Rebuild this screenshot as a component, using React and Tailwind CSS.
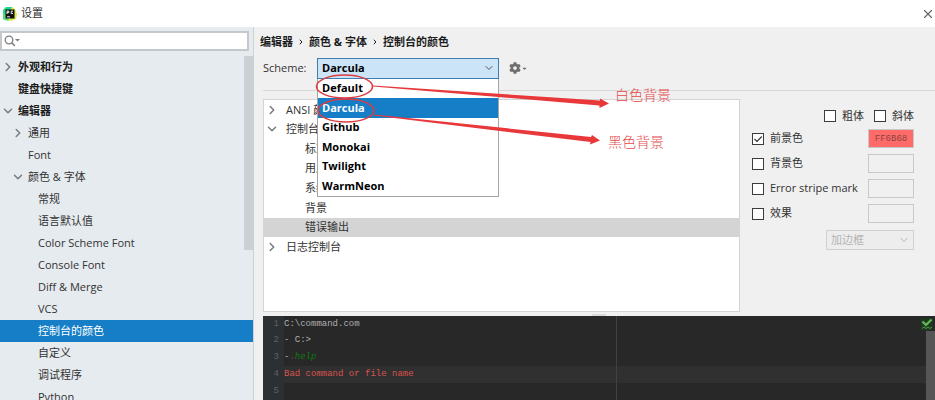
import { useState } from "react";
import { ChevronDown, ChevronRight, X } from "lucide-react";
import { FaCaretDown, FaCog } from "react-icons/fa";

const navItems = [
  { label: "外观和行为", level: 0, icon: "closed" },
  { label: "键盘快捷键", level: 0 },
  { label: "编辑器", level: 0, icon: "open" },
  { label: "通用", level: 1, icon: "closed" },
  { label: "Font", level: 1 },
  { label: "颜色 & 字体", level: 1, icon: "open" },
  { label: "常规", level: 2 },
  { label: "语言默认值", level: 2 },
  { label: "Color Scheme Font", level: 2 },
  { label: "Console Font", level: 2 },
  { label: "Diff & Merge", level: 2 },
  { label: "VCS", level: 2 },
  { label: "控制台的颜色", level: 2 },
  { label: "自定义", level: 2 },
  { label: "调试程序", level: 2 },
  { label: "Python", level: 2 },
];

const navIndent = ["pl-0", "pl-2.5", "pl-5"];

const schemes = ["Default", "Darcula", "Github", "Monokai", "Twilight", "WarmNeon"];

const treeItems = [
  { label: "ANSI 颜色", icon: "closed" },
  { label: "控制台", icon: "open" },
  { label: "标准输出", child: true },
  { label: "用户输入", child: true },
  { label: "系统输出", child: true },
  { label: "背景", child: true },
  { label: "错误输出", child: true },
  { label: "日志控制台", icon: "closed" },
];

const colorRows = [
  { id: "foreground", label: "前景色", value: "FF6B68" },
  { id: "background", label: "背景色", value: "" },
  { id: "stripe", label: "Error stripe mark", value: "" },
  { id: "effects", label: "效果", value: "" },
];

const Arrow = ({ icon }) => (
  <span className="flex w-[18px] shrink-0 pl-px text-[#777b7e]">
    {icon === "open" && <ChevronDown size={14} strokeWidth={2.5} />}
    {icon === "closed" && <ChevronRight size={14} strokeWidth={2.5} />}
  </span>
);

const Logo = () => (
  <svg width="14" height="14" viewBox="0 0 14 14">
    <path d="M0 3 3 0 9 0 11 4 3 13 0 12Z" fill="#21d789" />
    <path d="M9 0 12 2 14 7 13 12 8 14 3 12Z" fill="#d6ee4a" />
    <path d="M0 8 3 6 6 14 1 13Z" fill="#5fe07a" />
    <rect x="2.5" y="2.5" width="9" height="9" fill="#111" />
    <path d="M4 7V4H5.8V5.7H4M10 4.2H8.2V6.5H10M4 9.8H7" stroke="#fff" fill="none" strokeWidth="0.9" />
  </svg>
);

const CheckBox = ({ id, label, defaultChecked }) => (
  <label htmlFor={id} className="flex items-center gap-1.5 whitespace-nowrap">
    <span className="relative flex">
      <input
        id={id}
        type="checkbox"
        defaultChecked={defaultChecked}
        className="peer size-3 appearance-none border border-[#3c3c3c] bg-white"
      />
      <svg
        viewBox="0 0 12 12"
        className="pointer-events-none absolute inset-0 hidden size-3 peer-checked:block"
      >
        <path d="M2.5 6 5 8.5 9.8 3.5" fill="none" stroke="#333" strokeWidth="1.1" />
      </svg>
    </span>
    {label}
  </label>
);

const SideNav = () => {
  const [active, setActive] = useState("控制台的颜色");

  return (
    <aside className="flex w-[254px] shrink-0 flex-col border-r border-[#cdd1d4] bg-[#e6ebef] pt-1">
      <div className="mr-1 flex h-5 shrink-0 items-center border-2 border-[#c3c8cc] bg-white pl-0.5">
        <svg width="16" height="12" viewBox="0 0 16 12" className="shrink-0">
          <circle cx="5" cy="5" r="3.8" fill="none" stroke="#7d7d7d" strokeWidth="1.3" />
          <path d="M7.8 7.8 10.8 11" stroke="#7d7d7d" strokeWidth="1.6" />
          <path d="M11 4H16L13.5 6.5Z" fill="#7d7d7d" />
        </svg>
        <input aria-label="搜索" className="min-w-0 flex-1 bg-transparent outline-none" />
      </div>
      <nav className="relative mt-[5px]">
        {navItems.map((item) => (
          <button
            key={item.label}
            onClick={() => setActive(item.label)}
            className={`flex h-[22px] w-full items-center text-left ${navIndent[item.level]} ${
              item.level === 0 ? "font-bold text-[#1c1c1c]" : ""
            } ${active === item.label ? "bg-[#157ec7] text-white" : ""}`}
          >
            <Arrow icon={item.icon} />
            {item.label}
          </button>
        ))}
        <div className="absolute right-0 top-0 h-[194px] w-[9px] bg-[#cbd0d4]" />
      </nav>
    </aside>
  );
};

const SchemePicker = () => {
  const [scheme, setScheme] = useState("Darcula");

  return (
    <div className="flex h-5 items-center">
      <label htmlFor="scheme" className="w-[54px]">
        Scheme:
      </label>
      <div className="relative w-[182px] font-bold text-black">
        <select
          id="scheme"
          value={scheme}
          onChange={(e) => setScheme(e.target.value)}
          className="block h-[21px] w-full appearance-none border border-[#3e7fb3] bg-[#cce4f7] pl-1 outline-none"
        >
          {schemes.map((name) => (
            <option key={name}>{name}</option>
          ))}
        </select>
        <ChevronDown size={12} className="pointer-events-none absolute right-1 top-1 text-[#555]" />
        <div className="absolute left-0 top-full z-10 grid h-[118px] w-full grid-rows-6 border border-t-0 border-[#a6a6a6] bg-white">
          {schemes.map((name) => (
            <button
              key={name}
              onClick={() => setScheme(name)}
              className={`flex items-center pl-1 text-left font-bold ${
                scheme === name ? "bg-[#157ec7] text-white" : ""
              }`}
            >
              {name}
            </button>
          ))}
        </div>
      </div>
      <button aria-label="Scheme actions" className="ml-2.5 flex items-center text-[#6e6e6e]">
        <FaCog size={12} />
        <FaCaretDown size={7} />
      </button>
    </div>
  );
};

const ColorOptions = () => (
  <div className="flex w-[195px] shrink-0 flex-col pl-3 pr-[21px] pt-[7px]">
    <div className="flex h-5 items-center justify-end gap-2.5">
      <CheckBox id="bold" label="粗体" />
      <CheckBox id="italic" label="斜体" />
    </div>
    {colorRows.map((row) => (
      <div key={row.id} className="flex h-[25px] items-center justify-between">
        <CheckBox id={row.id} label={row.label} defaultChecked={row.value !== ""} />
        <input
          aria-label={`${row.label} value`}
          defaultValue={row.value}
          className={`h-[19px] w-[46px] border border-[#c8c8c8] text-center font-['Liberation_Mono',monospace] text-[9px] text-[#8a4442] ${
            row.value ? "bg-[#ff6b68]" : "bg-[#f0f0f0]"
          }`}
        />
      </div>
    ))}
    <div className="relative mt-1 w-[88px] self-end text-[#b4b4b4]">
      <select
        aria-label="效果类型"
        disabled
        className="block h-5 w-full appearance-none border border-[#d0d0d0] bg-[#ededed] pl-1"
      >
        <option>加边框</option>
      </select>
      <ChevronDown size={12} className="pointer-events-none absolute right-1 top-1" />
    </div>
  </div>
);

const Preview = () => (
  <div className="relative flex-1 bg-[#282828] font-['Liberation_Mono',monospace] text-[9px] text-[#b0b0b0]">
    <div className="grid h-[84px] grid-rows-5">
      {[
        <span>C:\command.com</span>,
        <span>- C:&gt;</span>,
        <span>
          -<span className="text-[#555]">.</span>
          <i className="text-[#0f7a0f]">help</i>
        </span>,
        <span className="text-[#d9534f]">Bad command or file name</span>,
        <span />,
      ].map((line, index) => (
        <div key={index} className={`flex items-center ${index === 3 ? "bg-[#303030]" : ""}`}>
          <span className="flex w-[21px] items-center justify-end self-stretch bg-[#2c3032] pr-[5px] text-[#5c6164]">
            {index + 1}
          </span>
          <span className="flex whitespace-pre">{line}</span>
        </div>
      ))}
    </div>
    {/* right margin guide */}
    <div className="absolute inset-y-0 left-[353px] w-px bg-[#414141]" />
    <div className="absolute bottom-0 right-0 top-[15px] w-[9px] bg-[#565656]" />
    <svg width="12" height="12" viewBox="0 0 12 12" className="absolute right-0.5 top-0.5">
      <rect width="12" height="12" fill="#1d3a1d" />
      <path d="M1.5 3.5 5 7 10.5 1.5" fill="none" stroke="#62b85c" strokeWidth="2.2" />
      <path d="M1 10.5 3 9 5 10.5 7 9 9 10.5 11 9" fill="none" stroke="#4b9c47" />
    </svg>
  </div>
);

// hand drawn marks over the scheme list
const Annotations = () => (
  <div className="pointer-events-none absolute left-0 top-0 z-20 font-['Liberation_Serif','Noto_Sans_CJK_SC',serif] text-sm font-light text-[#e5484a]">
    <svg width="430" height="130" viewBox="254 27 430 130">
      <g fill="none" stroke="#dc3c40" strokeWidth="1.6">
        <ellipse cx="344.5" cy="86.5" rx="28" ry="11.5" />
        <ellipse cx="346" cy="110.5" rx="28" ry="11.5" />
      </g>
      <g fill="#e8383a">
        <path d="M373 85.5 600 100.5 600 98.5 609 103.5 599.5 108 599.5 105.5 373 86.5Z" />
        <path d="M374 114.5 591 137 592 135 600 140.5 590 144.5 590.5 142 374 115.5Z" />
      </g>
    </svg>
    <span className="absolute left-[361px] top-[59px] whitespace-nowrap">白色背景</span>
    <span className="absolute left-[354px] top-[106px] whitespace-nowrap">黑色背景</span>
  </div>
);

const App = () => {
  return (
    <div className="flex h-screen flex-col overflow-hidden bg-[#f0f0f0] font-['Open_Sans','Noto_Sans_CJK_SC',sans-serif] text-[11px] text-[#333]">
      <header className="flex h-[27px] shrink-0 items-center bg-white pl-[3px]">
        <Logo />
        <h1 className="ml-1 flex-1">设置</h1>
        <button aria-label="关闭" className="text-[#666]">
          <X size={14} strokeWidth={2} />
        </button>
      </header>
      <div className="flex min-h-0 flex-1">
        <SideNav />
        <main className="relative flex min-w-0 flex-1 flex-col pl-[9px]">
          <h2 className="-ml-1 mt-1 flex h-[22px] items-center gap-1 pl-px font-bold text-[#1c1c1c]">
            编辑器 <ChevronRight size={8} strokeWidth={3} /> 颜色 &amp; 字体{" "}
            <ChevronRight size={8} strokeWidth={3} /> 控制台的颜色
          </h2>
          <div className="mt-[5px]">
            <SchemePicker />
          </div>
          <div className="mt-3 flex shrink-0 border-t border-[#d9d9d9] pt-2">
            <div className="h-[213px] min-w-0 flex-1 border border-[#d4d4d4] bg-white">
              <ul className="grid h-[157px] grid-rows-8">
                {treeItems.map((item) => (
                  <li
                    key={item.label}
                    className={`flex items-center ${item.child ? "pl-[23px]" : "pl-0"} ${
                      item.label === "错误输出" ? "bg-[#d4d4d4]" : ""
                    }`}
                  >
                    <Arrow icon={item.icon} />
                    <span className={item.child ? "" : "pl-1"}>{item.label}</span>
                  </li>
                ))}
              </ul>
            </div>
            <ColorOptions />
          </div>
          <div className="flex h-1 shrink-0 items-end justify-center">
            <span className="h-0.5 w-3.5 bg-[#dadada]" />
          </div>
          <Preview />
          <Annotations />
        </main>
      </div>
    </div>
  );
};

export default App;
